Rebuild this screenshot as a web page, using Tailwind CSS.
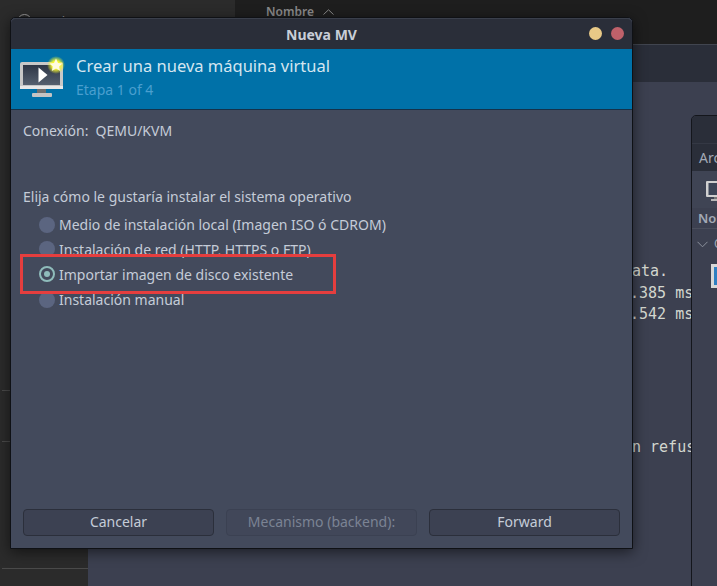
<!DOCTYPE html>
<html lang="es">
<head>
  <title>Nueva MV</title>
  <meta charset="UTF-8" />
  <script src="https://cdn.jsdelivr.net/npm/@tailwindcss/browser@4"></script>
</head>
<body class="bg-[#1e1e1e] overflow-hidden">
  <div class="relative w-[717px] h-[586px] overflow-hidden font-['Noto_Sans',sans-serif]">

    <!-- file manager behind, left -->
    <div class="absolute left-0 top-0 w-[235px] h-[586px] bg-[#2b2b2b]">
      <div class="absolute left-[2px] top-[390px] w-[86px] h-px bg-[#4a4a4a]"></div>
      <div class="absolute left-[2px] top-[441px] w-[86px] h-px bg-[#4a4a4a]"></div>
      <div class="absolute left-[2px] top-[568px] w-[86px] h-px bg-[#4a4a4a]"></div>
      <div class="absolute left-[17px] top-[14px] w-[15px] h-[15px] rounded-full border border-[#9a9a9a]"></div>
      <span class="absolute left-[40px] top-[12px] text-[13px] text-[#9a9a9a]">Recientes</span>
    </div>
    <div class="absolute left-[266px] top-[3px] flex items-center gap-[9px] text-[12px] font-semibold text-[#8a8a8a]">
      <span>Nombre</span>
      <svg width="11" height="6" viewBox="0 0 11 6" fill="none" stroke="#8a8a8a"><path d="M0.5 5.5 5.5 0.8 10.5 5.5" /></svg>
    </div>

    <!-- terminal behind -->
    <div class="absolute left-[88px] top-[44px] w-[640px] h-[550px] bg-[#3c4050] border-t border-[#41454f]">
      <div class="h-[37px] bg-[#2a2e39]"></div>
      <div class="absolute left-[544px] top-[216px] font-['DejaVu_Sans_Mono',monospace] text-[15px] leading-[21px] text-[#d3d7cf] whitespace-pre">ata.</div>
      <div class="absolute left-[542px] top-[238px] font-['DejaVu_Sans_Mono',monospace] text-[15px] leading-[21px] text-[#d3d7cf] whitespace-pre">.385 ms</div>
      <div class="absolute left-[542px] top-[259px] font-['DejaVu_Sans_Mono',monospace] text-[15px] leading-[21px] text-[#d3d7cf] whitespace-pre">.542 ms</div>
      <div class="absolute left-[544px] top-[392px] font-['DejaVu_Sans_Mono',monospace] text-[15px] leading-[21px] text-[#d3d7cf] whitespace-pre">n refused</div>
    </div>

    <!-- virt-manager window behind, right -->
    <div class="absolute left-[691px] top-[115px] w-[60px] h-[480px] bg-[#3c4050] border border-[#14161c] rounded-tl-[5px] overflow-hidden">
      <div class="h-[27px] bg-[#2a2e39]"></div>
      <div class="h-[28px] bg-[#2a2e39] border-t border-[#343844] pl-[7px] text-[14px] leading-[27px] text-[#a3a9b5]">Archivo</div>
      <div class="h-[37px] bg-[#3f4454] pl-[14px] pt-[9px]">
        <svg width="26" height="22" viewBox="0 0 26 22">
          <rect x="0" y="1" width="24" height="16" rx="1" fill="#d0d0d0" />
          <rect x="2.500" y="3" width="19" height="12" fill="#3c4557" />
          <path d="M12 5 18 9 12 13Z" fill="#fff" />
          <rect x="8" y="17" width="8" height="2" fill="#777" />
          <rect x="5" y="19" width="14" height="2" fill="#b8b8b8" />
          <circle cx="21" cy="3" r="4" fill="#e8e030" />
        </svg>
      </div>
      <div class="h-[21px] border-b border-[#4a4e5c] pl-[6px] text-[13px] font-semibold leading-[20px] text-[#a3a9b5]">Nombre</div>
      <div class="flex items-center h-[30px] pl-[5px] gap-[6px] text-[12px] text-[#a3a9b5]">
        <svg width="11" height="7" viewBox="0 0 11 7" fill="none" stroke="#8b909c"><path d="M0.5 0.8 5.5 5.8 10.5 0.8" /></svg>
        <span>QEMU</span>
      </div>
      <div class="ml-[19px] mt-[5px] w-[24px] h-[24px] bg-[#d8d8d8] p-[3px]"><div class="h-full bg-[#2f7fc1]"></div></div>
    </div>

    <!-- dialog -->
    <div class="absolute left-[10px] top-[17px] w-[623px] h-[532px] flex flex-col bg-[#434a5c] border border-[#0f1115] rounded-t-[5px] shadow-[0_3px_14px_rgba(0,0,0,0.55)] text-[#c5ccd8]">
      <div class="relative h-[31px] shrink-0 flex items-center justify-center bg-[#2a2e39] border-t border-[#3a3f4b] rounded-t-[5px]">
        <span class="text-[14px] font-bold text-[#c9ced8]">Nueva MV</span>
        <div class="absolute right-[8px] top-[8px] flex gap-[9px]">
          <span class="w-[13px] h-[13px] rounded-full bg-[#e8c987]"></span>
          <span class="w-[13px] h-[13px] rounded-full bg-[#bf616a]"></span>
        </div>
      </div>

      <div class="h-[61px] shrink-0 flex bg-[#0071a8] border-b border-[#14324a]">
        <svg class="ml-[8px] mt-[6px] shrink-0" width="48" height="48" viewBox="0 0 48 48">
          <defs>
            <radialGradient id="glow"><stop offset="0.45" stop-color="#f8f830" /><stop offset="1" stop-color="#f8f830" stop-opacity="0" /></radialGradient>
            <linearGradient id="scr" x1="0" y1="0" x2="0" y2="1"><stop offset="0" stop-color="#2e3646" /><stop offset="1" stop-color="#55606f" /></linearGradient>
          </defs>
          <rect x="1" y="7" width="43" height="27" rx="2" fill="#c8c8c8" />
          <rect x="1" y="31" width="43" height="3" fill="#e8e8e8" />
          <rect x="4" y="10" width="37" height="20" fill="url(#scr)" />
          <path d="M19.500 12.500 28.500 20 19.500 27.500Z" fill="#fff" />
          <rect x="18" y="34" width="9" height="4" fill="#6f6f6f" />
          <rect x="13" y="38" width="20" height="4" rx="1" fill="#c4c4c4" />
          <circle cx="37" cy="10" r="9" fill="url(#glow)" />
          <path d="M37 3.500 39 8 43.500 8.500 40.200 11.500 41.200 16 37 13.600 32.800 16 33.800 11.500 30.500 8.500 35 8Z" fill="#fffbe0" />
        </svg>
        <div class="ml-[9px] pt-[6px]">
          <div class="text-[16.500px] leading-[22px] text-[#d5e6f0]">Crear una nueva máquina virtual</div>
          <div class="mt-[3px] text-[14px] leading-[20px] text-[#4a9fcf]">Etapa 1 of 4</div>
        </div>
      </div>

      <div class="flex-1 flex flex-col px-[12px] text-[14px]">
        <div class="mt-[11px] flex gap-[7px] leading-[20px]">
          <span>Conexión:</span><span>QEMU/KVM</span>
        </div>
        <div class="mt-[46px] leading-[20px]">Elija cómo le gustaría instalar el sistema operativo</div>
        <div class="mt-[5px] ml-[16px] flex flex-col">
          <label class="h-[25px] flex items-center gap-[4px]">
            <span class="w-[16px] h-[16px] rounded-full bg-[#5b6580]"></span><span>Medio de instalación local (Imagen ISO ó CDROM)</span>
          </label>
          <label class="h-[24px] flex items-center gap-[4px]">
            <span class="w-[16px] h-[16px] rounded-full bg-[#5b6580]"></span><span>Instalación de red (HTTP, HTTPS o FTP)</span>
          </label>
          <label class="h-[26px] flex items-center gap-[4px]">
            <span class="w-[16px] h-[16px] rounded-full border-2 border-[#8fbcbb] flex items-center justify-center"><span class="w-[6px] h-[6px] rounded-full bg-[#8fbcbb]"></span></span><span>Importar imagen de disco existente</span>
          </label>
          <label class="h-[25px] flex items-center gap-[4px]">
            <span class="w-[16px] h-[16px] rounded-full bg-[#5b6580]"></span><span>Instalación manual</span>
          </label>
        </div>
        <div class="mt-auto mb-[12px] grid grid-cols-3 gap-[12px] text-[14px]">
          <button class="h-[27px] pb-[2px] rounded-[4px] bg-[#3c4152] border border-[#2b2f3b] text-[#c5ccd8]">Cancelar</button>
          <button class="h-[27px] pb-[2px] rounded-[4px] bg-[#414759] border border-[#3b4152] text-[#7b8394]">Mecanismo (backend):</button>
          <button class="h-[27px] pb-[2px] rounded-[4px] bg-[#3c4152] border border-[#2b2f3b] text-[#c5ccd8]">Forward</button>
        </div>
      </div>

      <!-- annotation box -->
      <div class="absolute left-[9px] top-[236px] w-[316px] h-[40px] border-[3px] border-[#e53e3e] pointer-events-none"></div>
    </div>
  </div>
</body>
</html>
